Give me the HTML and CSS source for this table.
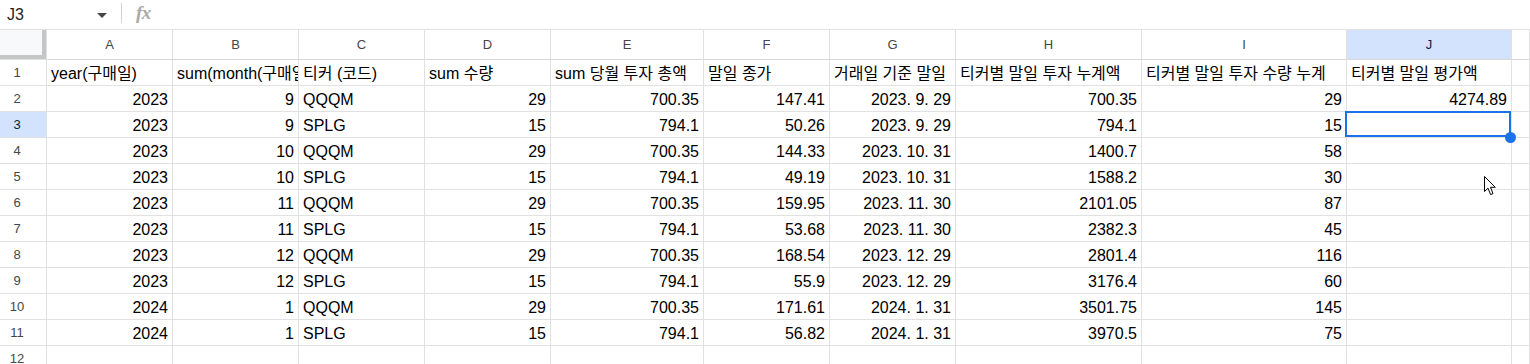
FILE: index.html
```html
<!DOCTYPE html>
<html lang="ko">
<head>
<meta charset="utf-8">
<title>Sheet</title>
<link rel="stylesheet" href="styles.css">
</head>
<body>
<div class="formula-bar">
  <div class="namebox"><span class="ref">J3</span><span class="caret"></span></div>
  <div class="sep"></div>
  <div class="fx">fx</div>
</div>
<div class="grid">
  <div class="corner"></div>
  <div class="ch">A</div><div class="ch">B</div><div class="ch">C</div><div class="ch">D</div><div class="ch">E</div><div class="ch">F</div><div class="ch">G</div><div class="ch">H</div><div class="ch">I</div><div class="ch sel">J</div><div class="ch"></div>

  <div class="rh">1</div>
  <div class="c">year(구매일)</div><div class="c">sum(month(구매일))</div><div class="c">티커 (코드)</div><div class="c">sum 수량</div><div class="c">sum 당월 투자 총액</div><div class="c">말일 종가</div><div class="c">거래일 기준 말일</div><div class="c">티커별 말일 투자 누계액</div><div class="c">티커별 말일 투자 수량 누계</div><div class="c">티커별 말일 평가액</div><div class="c"></div>

  <div class="rh">2</div>
  <div class="c r">2023</div><div class="c r">9</div><div class="c">QQQM</div><div class="c r">29</div><div class="c r">700.35</div><div class="c r">147.41</div><div class="c r">2023. 9. 29</div><div class="c r">700.35</div><div class="c r">29</div><div class="c r">4274.89</div><div class="c"></div>

  <div class="rh sel">3</div>
  <div class="c r">2023</div><div class="c r">9</div><div class="c">SPLG</div><div class="c r">15</div><div class="c r">794.1</div><div class="c r">50.26</div><div class="c r">2023. 9. 29</div><div class="c r">794.1</div><div class="c r">15</div><div class="c active"><span class="selbox"></span><span class="handle"></span></div><div class="c"></div>

  <div class="rh">4</div>
  <div class="c r">2023</div><div class="c r">10</div><div class="c">QQQM</div><div class="c r">29</div><div class="c r">700.35</div><div class="c r">144.33</div><div class="c r">2023. 10. 31</div><div class="c r">1400.7</div><div class="c r">58</div><div class="c"></div><div class="c"></div>

  <div class="rh">5</div>
  <div class="c r">2023</div><div class="c r">10</div><div class="c">SPLG</div><div class="c r">15</div><div class="c r">794.1</div><div class="c r">49.19</div><div class="c r">2023. 10. 31</div><div class="c r">1588.2</div><div class="c r">30</div><div class="c"></div><div class="c"></div>

  <div class="rh">6</div>
  <div class="c r">2023</div><div class="c r">11</div><div class="c">QQQM</div><div class="c r">29</div><div class="c r">700.35</div><div class="c r">159.95</div><div class="c r">2023. 11. 30</div><div class="c r">2101.05</div><div class="c r">87</div><div class="c"></div><div class="c"></div>

  <div class="rh">7</div>
  <div class="c r">2023</div><div class="c r">11</div><div class="c">SPLG</div><div class="c r">15</div><div class="c r">794.1</div><div class="c r">53.68</div><div class="c r">2023. 11. 30</div><div class="c r">2382.3</div><div class="c r">45</div><div class="c"></div><div class="c"></div>

  <div class="rh">8</div>
  <div class="c r">2023</div><div class="c r">12</div><div class="c">QQQM</div><div class="c r">29</div><div class="c r">700.35</div><div class="c r">168.54</div><div class="c r">2023. 12. 29</div><div class="c r">2801.4</div><div class="c r">116</div><div class="c"></div><div class="c"></div>

  <div class="rh">9</div>
  <div class="c r">2023</div><div class="c r">12</div><div class="c">SPLG</div><div class="c r">15</div><div class="c r">794.1</div><div class="c r">55.9</div><div class="c r">2023. 12. 29</div><div class="c r">3176.4</div><div class="c r">60</div><div class="c"></div><div class="c"></div>

  <div class="rh">10</div>
  <div class="c r">2024</div><div class="c r">1</div><div class="c">QQQM</div><div class="c r">29</div><div class="c r">700.35</div><div class="c r">171.61</div><div class="c r">2024. 1. 31</div><div class="c r">3501.75</div><div class="c r">145</div><div class="c"></div><div class="c"></div>

  <div class="rh">11</div>
  <div class="c r">2024</div><div class="c r">1</div><div class="c">SPLG</div><div class="c r">15</div><div class="c r">794.1</div><div class="c r">56.82</div><div class="c r">2024. 1. 31</div><div class="c r">3970.5</div><div class="c r">75</div><div class="c"></div><div class="c"></div>

  <div class="rh">12</div>
  <div class="c"></div><div class="c"></div><div class="c"></div><div class="c"></div><div class="c"></div><div class="c"></div><div class="c"></div><div class="c"></div><div class="c"></div><div class="c"></div><div class="c"></div>
</div>
<svg class="cursor" width="13" height="20" viewBox="0 0 13 20" aria-hidden="true">
  <path d="M0.5 0.5 L0.5 15.5 L4 12.2 L6.6 18.6 L9 17.6 L6.5 11.3 L11.3 11.3 Z" fill="#fff" stroke="#000" stroke-width="1" stroke-linejoin="miter"/>
</svg>
</body>
</html>
```

FILE: styles.css
```css
html, body {
  margin: 0;
  padding: 0;
  background: #fff;
}
body {
  width: 1530px;
  height: 364px;
  overflow: hidden;
  position: relative;
  font-family: "Liberation Sans", "Noto Sans CJK KR", sans-serif;
  color: #000;
}
.formula-bar {
  height: 29px;
  border-bottom: 1px solid #e1e1e1;
  display: flex;
  align-items: center;
}
.namebox {
  width: 121px;
  height: 29px;
  display: flex;
  align-items: center;
  justify-content: space-between;
  padding: 0 14px 0 7px;
  box-sizing: border-box;
}
.ref {
  font-size: 16px;
  color: #1f1f1f;
  line-height: 20px;
}
.caret {
  width: 0;
  height: 0;
  border-left: 5px solid transparent;
  border-right: 5px solid transparent;
  border-top: 5px solid #444746;
  margin-top: 1px;
}
.sep {
  width: 1px;
  height: 20px;
  background: #d3d3d3;
  margin-top: -3px;
}
.fx {
  margin-left: 14px;
  font-family: "Liberation Serif", serif;
  font-style: italic;
  font-weight: bold;
  font-size: 19px;
  color: #a9a9a9;
  line-height: 20px;
  margin-top: -4px;
  letter-spacing: -0.5px;
}
.grid {
  display: grid;
  grid-template-columns: 47px 126px 126px 126px 126px 153px 126px 126px 186px 205px 165px 1fr;
  grid-template-rows: 30px;
  grid-auto-rows: 26px;
}
.grid > div {
  box-sizing: border-box;
  border-right: 1px solid #e1e1e1;
  border-bottom: 1px solid #e1e1e1;
  overflow: hidden;
  white-space: nowrap;
}
.corner {
  background: #f8f9fa;
  box-shadow: inset -4px -4px 0 0 #c4c7c5;
}
.grid > .ch {
  font-size: 13px;
  color: #444746;
  text-align: center;
  line-height: 29px;
  border-bottom-color: #d7d7d7;
}
.grid > .rh {
  font-size: 13px;
  color: #444746;
  text-align: center;
  padding-right: 12px;
  line-height: 24px;
  padding-top: 1px;
}
.grid > .sel {
  background: #d3e3fd;
  color: #0b1f46;
}
.grid > .c {
  font-size: 16px;
  line-height: 25px;
  padding: 1px 4px 0 4px;
}
.grid > .r {
  text-align: right;
}
.grid > .active {
  position: relative;
  overflow: visible;
  z-index: 2;
}
.selbox {
  position: absolute;
  left: -2px;
  top: -1px;
  right: 0;
  bottom: 0;
  border: 2px solid #1a73e8;
}
.handle {
  position: absolute;
  right: -5px;
  bottom: -6px;
  width: 11px;
  height: 11px;
  border-radius: 50%;
  background: #1a73e8;
}
.cursor {
  position: absolute;
  left: 1484px;
  top: 176px;
}
```
